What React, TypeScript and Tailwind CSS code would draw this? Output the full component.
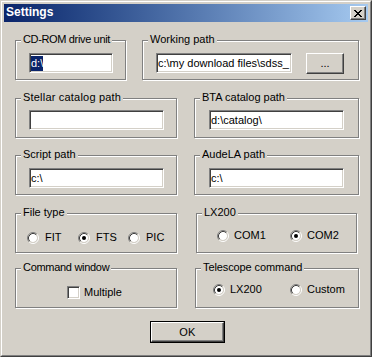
import React from "react";

const sunken =
  "border border-t-[#808080] border-l-[#808080] border-r-white border-b-white shadow-[inset_1px_1px_0_#404040,inset_-1px_-1px_0_#d4d0c8]";
const raised =
  "border border-t-white border-l-white border-r-[#404040] border-b-[#404040] shadow-[inset_-1px_-1px_0_#808080]";

function Group({
  label,
  className = "",
  labelClass = "",
  children,
}: {
  label: string;
  className?: string;
  labelClass?: string;
  children?: React.ReactNode;
}) {
  return (
    <div
      className={`relative h-[40px] shrink-0 border border-[#808080] shadow-[inset_1px_1px_0_#fff,1px_1px_0_#fff] ${className}`}
    >
      <span
        className={`absolute left-[5px] top-[-8px] bg-[#d4d0c8] px-[2px] leading-[13px] whitespace-nowrap ${labelClass}`}
      >
        {label}
      </span>
      {children}
    </div>
  );
}

function TextBox({
  value,
  className = "",
  selected = false,
}: {
  value: string;
  className?: string;
  selected?: boolean;
}) {
  return (
    <div
      className={`h-[20px] bg-white flex items-center pl-[1px] overflow-hidden whitespace-nowrap ${sunken} ${className}`}
    >
      {selected ? (
        <span className="bg-[#0a246a] text-white leading-[15px]">{value}</span>
      ) : (
        <span className="leading-[15px]">{value}</span>
      )}
    </div>
  );
}

function Radio({ checked = false }: { checked?: boolean }) {
  return (
    <svg width="12" height="12" viewBox="0 0 12 12" className="shrink-0">
      <circle cx="6" cy="6" r="4" fill="#fff" />
      <path d="M2.11 9.89A5.5 5.5 0 0 1 9.89 2.11" stroke="#808080" fill="none" />
      <path d="M9.89 2.11A5.5 5.5 0 0 1 2.11 9.89" stroke="#fff" fill="none" />
      <path d="M2.82 9.18A4.5 4.5 0 0 1 9.18 2.82" stroke="#404040" fill="none" />
      <path d="M9.18 2.82A4.5 4.5 0 0 1 2.82 9.18" stroke="#d4d0c8" fill="none" />
      {checked && <circle cx="6" cy="6" r="2" fill="#000" />}
    </svg>
  );
}

function RadioItem({
  label,
  checked = false,
  gap = "gap-[6px]",
  width,
}: {
  label: string;
  checked?: boolean;
  gap?: string;
  width: string;
}) {
  return (
    <div className={`flex items-center ${gap} ${width} shrink-0`}>
      <Radio checked={checked} />
      <span className="leading-[13px]">{label}</span>
    </div>
  );
}

function CloseGlyph() {
  const px: [number, number][] = [
    [0, 0], [1, 0], [6, 0], [7, 0],
    [1, 1], [2, 1], [5, 1], [6, 1],
    [2, 2], [3, 2], [4, 2], [5, 2],
    [3, 3], [4, 3],
    [2, 4], [3, 4], [4, 4], [5, 4],
    [1, 5], [2, 5], [5, 5], [6, 5],
    [0, 6], [1, 6], [6, 6], [7, 6],
  ];
  return (
    <svg width="8" height="7" viewBox="0 0 8 7" shapeRendering="crispEdges">
      {px.map(([x, y], i) => (
        <rect key={i} x={x} y={y} width="1" height="1" fill="#000" />
      ))}
    </svg>
  );
}

export default function App() {
  return (
    <div className="w-[372px] h-[357px] font-['Liberation_Sans',Arial,sans-serif] text-[11px] text-black">
      <div className="w-full h-full border border-t-[#d4d0c8] border-l-[#d4d0c8] border-r-[#404040] border-b-[#404040]">
        <div className="w-full h-full border border-t-white border-l-white border-r-[#808080] border-b-[#808080] bg-[#d4d0c8] p-[2px] flex flex-col">
          {/* Caption */}
          <div className="h-[18px] shrink-0 flex items-center bg-gradient-to-r from-[#0a246a] to-[#a6caf0] pl-[2px] pr-[2px]">
            <span className="flex-1 font-bold text-[12px] text-white leading-[16px] pb-[2px]">
              Settings
            </span>
            <div className={`w-[16px] h-[14px] bg-[#d4d0c8] flex items-center justify-center ${raised}`}>
              <CloseGlyph />
            </div>
          </div>

          {/* Body */}
          <div className="pl-[11px] flex flex-col">
            {/* Row 1 */}
            <div className="mt-[18px] flex">
              <Group label="CD-ROM drive unit" labelClass="tracking-[-0.35px]" className="w-[111px]">
                <div className="pt-[12px] pl-[13px]">
                  <TextBox value="d:\" selected className="w-[84px]" />
                </div>
              </Group>
              <Group label="Working path" className="ml-[16px] w-[217px]">
                <div className="pt-[12px] pl-[13px] flex items-start">
                  <TextBox value="c:\my download files\sdss_" className="w-[136px]" />
                  <div
                    className={`ml-[14px] w-[38px] h-[21px] flex items-center justify-center ${raised}`}
                  >
                    <span className="leading-[13px]">...</span>
                  </div>
                </div>
              </Group>
            </div>

            {/* Row 2 */}
            <div className="mt-[18px] flex">
              <Group label="Stellar catalog path" labelClass="tracking-[0.2px]" className="w-[162px]">
                <div className="pt-[11px] pl-[13px]">
                  <TextBox value="" className="w-[135px]" />
                </div>
              </Group>
              <Group label="BTA catalog path" className="ml-[17px] w-[165px]">
                <div className="pt-[11px] pl-[14px]">
                  <TextBox value="d:\catalog\" className="w-[135px]" />
                </div>
              </Group>
            </div>

            {/* Row 3 */}
            <div className="mt-[17px] flex">
              <Group label="Script path" className="w-[162px]">
                <div className="pt-[12px] pl-[13px]">
                  <TextBox value="c:\" className="w-[135px]" />
                </div>
              </Group>
              <Group label="AudeLA path" className="ml-[17px] w-[165px]">
                <div className="pt-[12px] pl-[14px]">
                  <TextBox value="c:\" className="w-[135px]" />
                </div>
              </Group>
            </div>

            {/* Row 4 */}
            <div className="mt-[18px] flex">
              <Group label="File type" className="w-[162px]">
                <div className="pt-[17px] pl-[11px] flex">
                  <RadioItem label="FIT" width="w-[51px]" />
                  <RadioItem label="FTS" checked width="w-[50px]" />
                  <RadioItem label="PIC" width="w-[50px]" />
                </div>
              </Group>
              <Group label="LX200" className="ml-[19px] w-[161px]">
                <div className="pt-[15px] pl-[20px] flex">
                  <RadioItem label="COM1" gap="gap-[5px]" width="w-[73px]" />
                  <RadioItem label="COM2" checked gap="gap-[5px]" width="w-[60px]" />
                </div>
              </Group>
            </div>

            {/* Row 5 */}
            <div className="mt-[15px] flex">
              <Group label="Command window" labelClass="tracking-[-0.3px]" className="w-[162px]">
                <div className="pt-[17px] pl-[51px] flex items-center gap-[4px]">
                  <div className={`w-[13px] h-[13px] bg-white ${sunken}`} />
                  <span className="leading-[13px]">Multiple</span>
                </div>
              </Group>
              <Group label="Telescope command" labelClass="tracking-[-0.1px]" className="ml-[18px] w-[164px]">
                <div className="pt-[14px] pl-[17px] flex">
                  <RadioItem label="LX200" checked gap="gap-[5px]" width="w-[77px]" />
                  <RadioItem label="Custom" gap="gap-[5px]" width="w-[70px]" />
                </div>
              </Group>
            </div>

            {/* OK button */}
            <div className="mt-[13px] flex">
              <div className="ml-[135px] w-[75px] h-[22px] border border-black">
                <div className={`w-full h-full flex items-center justify-center ${raised}`}>
                  <span className="leading-[13px] tracking-[0.3px]">OK</span>
                </div>
              </div>
            </div>
          </div>
        </div>
      </div>
    </div>
  );
}
